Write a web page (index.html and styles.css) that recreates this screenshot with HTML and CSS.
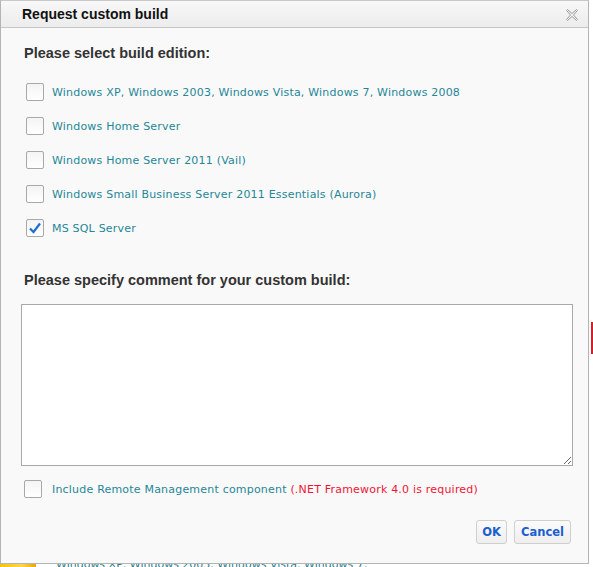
FILE: index.html
```html
<!DOCTYPE html>
<html>
<head>
<meta charset="utf-8">
<link rel="stylesheet" href="styles.css">
</head>
<body>
<div class="page">
  <div class="dialog">
    <div class="titlebar">
      <span class="title">Request custom build</span>
      <svg class="close" width="12" height="12" viewBox="0 0 12 12">
        <path d="M1.5 0.5 L6 4.5 L10.5 0.5 L11.5 1.5 L7.5 6 L11.5 10.5 L10.5 11.5 L6 7.5 L1.5 11.5 L0.5 10.5 L4.5 6 L0.5 1.5 Z" fill="#f4f4f4" stroke="#9a9a9a" stroke-width="1"/>
      </svg>
    </div>
    <div class="content">
      <h2 class="heading">Please select build edition:</h2>
      <div class="options">
        <label class="option"><span class="box"></span><span class="text">Windows XP, Windows 2003, Windows Vista, Windows 7, Windows 2008</span></label>
        <label class="option"><span class="box"></span><span class="text">Windows Home Server</span></label>
        <label class="option"><span class="box"></span><span class="text">Windows Home Server 2011 (Vail)</span></label>
        <label class="option"><span class="box"></span><span class="text">Windows Small Business Server 2011 Essentials (Aurora)</span></label>
        <label class="option"><span class="box checked"><svg width="14" height="14" viewBox="0 0 14 14"><path d="M2 7.5 L5.5 11 L12 2.5" fill="none" stroke="#1f6fd0" stroke-width="2.2"/></svg></span><span class="text">MS SQL Server</span></label>
      </div>
      <h2 class="heading heading2">Please specify comment for your custom build:</h2>
      <textarea class="comment"></textarea>
      <label class="option remote"><span class="box"></span><span class="text">Include Remote Management component <span class="req">(.NET Framework 4.0 is required)</span></span></label>
      <div class="buttons">
        <button class="btn ok">OK</button>
        <button class="btn cancel">Cancel</button>
      </div>
    </div>
  </div>
  <div class="under">
    <span class="under-icon"></span>
    <span class="under-text">Windows XP, Windows 2003, Windows Vista, Windows 7,</span>
  </div>
  <div class="redbar"></div>
</div>
</body>
</html>
```

FILE: styles.css
```css
html, body {
  margin: 0;
  padding: 0;
  background: #ffffff;
}
body {
  width: 593px;
  height: 567px;
  overflow: hidden;
  font-family: "DejaVu Sans", Verdana, sans-serif;
}
.page {
  position: relative;
  width: 593px;
  height: 567px;
}
.dialog {
  position: relative;
  z-index: 2;
  width: 587px;
  height: 562px;
  background: #f9f9f9;
  border: 1px solid #b4b4b4;
  border-top-color: #c8c8c8;
  display: flex;
  flex-direction: column;
}
.titlebar {
  height: 26px;
  border-bottom: 1px solid #c6c6c6;
  background: linear-gradient(#f8f8f8, #ececec);
  display: flex;
  align-items: center;
  justify-content: space-between;
  padding: 0 10px 0 21px;
}
.title {
  font-family: "Liberation Sans", Arial, sans-serif;
  font-weight: bold;
  font-size: 14px;
  color: #111;
}
.close {
  display: block;
  margin-top: 1px;
}
.content {
  padding: 15px 15px 0 20px;
  display: flex;
  flex-direction: column;
}
.heading {
  margin: 0 0 12px 3px;
  font-family: "Liberation Sans", Arial, sans-serif;
  font-weight: bold;
  font-size: 14.5px;
  line-height: 20px;
  color: #333;
}
.heading2 {
  margin-top: 25px;
  margin-bottom: 14px;
}
.options {
  display: flex;
  flex-direction: column;
}
.option {
  height: 34px;
  display: flex;
  align-items: center;
  padding-left: 5px;
  font-size: 11px;
  letter-spacing: 0.2px;
  color: #1f8797;
}
.box {
  width: 16px;
  height: 16px;
  border: 1px solid #a8a8a8;
  border-radius: 2px;
  background: linear-gradient(#f4f4f4, #ffffff);
  margin-right: 8px;
  display: flex;
  align-items: center;
  justify-content: center;
  flex: none;
}
.text {
  white-space: nowrap;
}
.req {
  color: #f01535;
}
.comment {
  display: block;
  width: 548px;
  height: 158px;
  margin: 0;
  padding: 1px;
  border: 1px solid #a9a9a9;
  background: #fff;
  resize: both;
  font-family: "DejaVu Sans", sans-serif;
  font-size: 11px;
}
.remote {
  margin-top: 6px;
  padding-left: 3px;
}
.remote .box {
  margin-right: 10px;
}
.buttons {
  display: flex;
  justify-content: flex-end;
  gap: 7px;
  margin-top: 14px;
  padding-right: 2px;
}
.btn {
  height: 24px;
  padding: 0;
  font-family: "DejaVu Sans", Verdana, sans-serif;
  font-weight: bold;
  font-size: 11.5px;
  color: #1a5ed0;
  background: linear-gradient(#fbfbfb, #eeeeee);
  border: 1px solid #cfcfcf;
  border-radius: 3px;
}
.btn.ok {
  width: 31px;
}
.btn.cancel {
  width: 57px;
}
.under {
  position: absolute;
  left: 0;
  top: 563px;
  z-index: 1;
  display: flex;
  align-items: flex-start;
  gap: 20px;
}
.under-icon {
  width: 36px;
  height: 8px;
  background: linear-gradient(90deg, #f6c400, #ffd54a 60%, #e9a600);
}
.under-text {
  font-size: 11px;
  color: #2a7a8a;
  line-height: 8px;
  margin-top: -2px;
}
.redbar {
  position: absolute;
  left: 591px;
  top: 322px;
  width: 2px;
  height: 32px;
  background: #d0202a;
}
```
